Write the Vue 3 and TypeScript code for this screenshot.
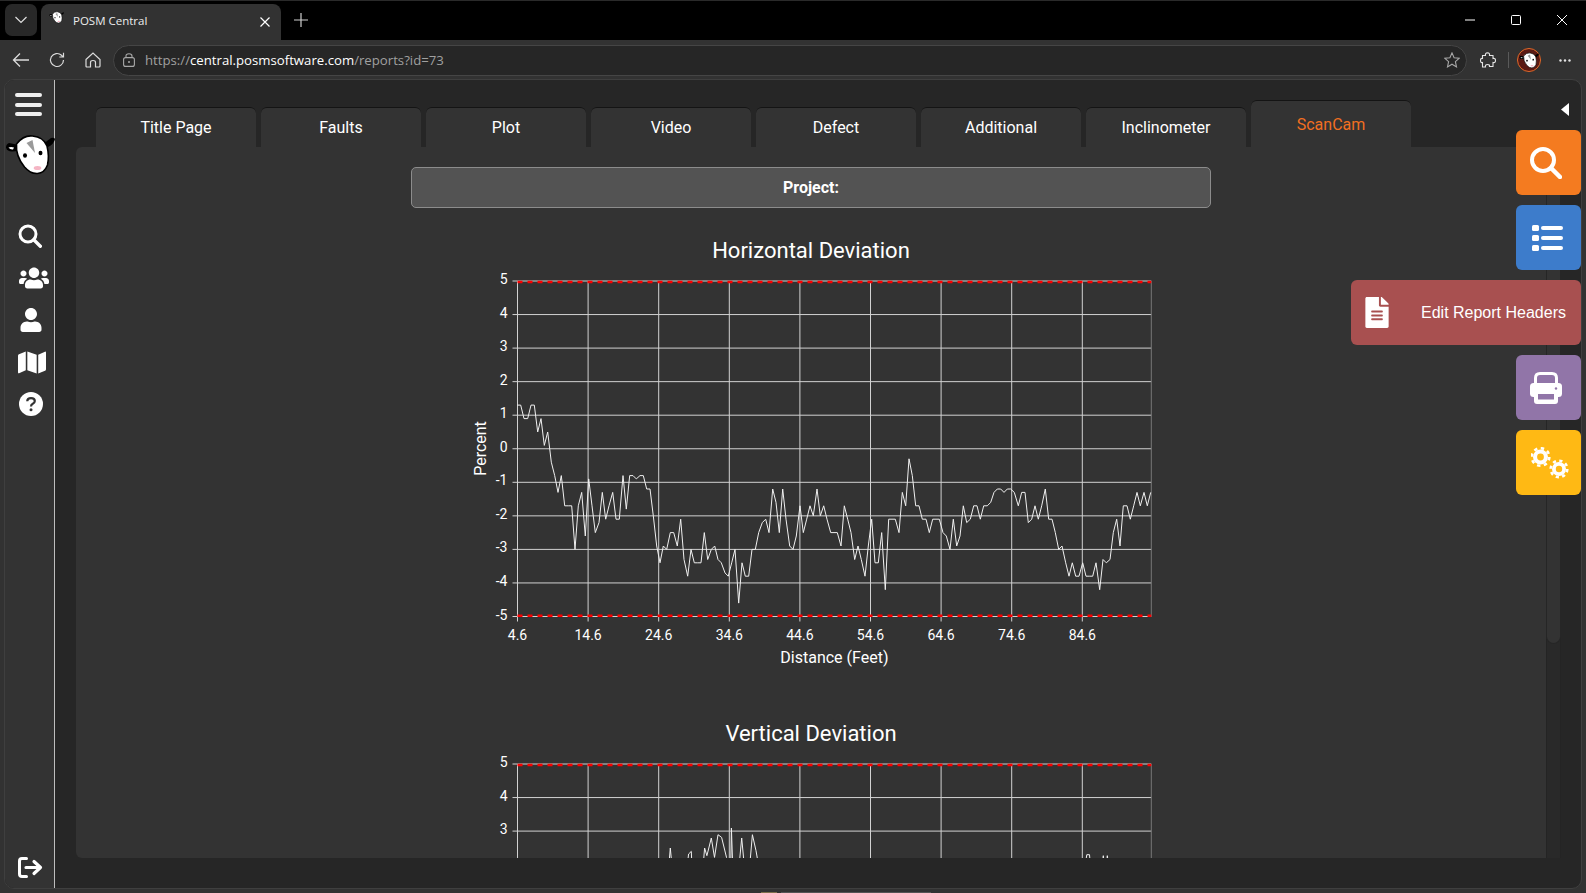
<script setup lang="ts">
const tabs: string[] = ['Title Page', 'Faults', 'Plot', 'Video', 'Defect', 'Additional', 'Inclinometer', 'ScanCam']

const originX = 461
const plotTop = 10
const unit = 33.55
const plotBottom = plotTop + unit * 10
const plotLeft = 517.5 - originX
const plotRight = 1151.3 - originX
const step = 70.6

const yOf = (v: number): number => plotTop + (5 - v) * unit

const left: number[] = [172,1.3,182,1.3,192,.9,203,.9,213,1.3,223,1.3,233,.5,243,.9,253,.1,263,.5,274,-.4,284,-.8,294,-1.3,304,-.8,314,-1.7,325,-1.7,335,-1.7,345,-3,355,-1.7,365,-1.3,376,-2.6,386,-.9,396,-1.7,406,-2.5,417,-2.2,427,-1.3,437,-2.1,447,-1.7,458,-1.3,468,-2.1,478,-2.1,489,-.8,499,-1.8,509,-.8,519,-.8,529,-.9,540,-.8,550,-.8,560,-1.2,570,-1.2,580,-2,590,-2.9,600,-3.4,610,-2.9,620,-3,631,-2.5,641,-2.5,652,-2.9,662,-2.1,672,-3.3,683,-3.8,693,-3,703,-3.4,713,-3.4,723,-3.4,733,-2.5,743,-3.3,754,-3,764,-2.9,774,-3.3,784,-3.4,795,-3.7,805,-3.8,815,-3.4,825,-3,836,-4.6,846,-3.4,856,-3.8,866,-3.8,876,-3,886,-3,896,-2.5,907,-2.2,917,-2.1,927,-2.5,938,-1.2,948,-1.6,958,-2.5,968,-1.2,978,-2.1,989,-2.9,999,-3,1009,-2.6]
const right: number[] = [0,-1.7,10,-2.5,20,-2.1,30,-1.7,40,-2,51,-1.2,61,-2,71,-1.7,81,-2.1,92,-2.5,102,-2.5,112,-2.5,123,-2.9,133,-1.7,143,-2.1,153,-2.5,164,-3.3,174,-2.9,184,-3.3,195,-3.8,205,-2.9,215,-2.1,225,-3.4,235,-3.4,245,-2.5,256,-4.2,266,-2.1,276,-2.1,286,-2.1,297,-2.5,307,-1.3,317,-1.7,327,-.3,337,-.8,347,-1.7,357,-1.7,367,-2.1,378,-2.1,388,-2.5,398,-2.1,408,-2.1,418,-2.1,429,-2.5,439,-2.6,450,-3,460,-2.1,470,-2.9,480,-2.6,490,-1.7,500,-2.2,511,-2.1,521,-1.7,531,-1.7,541,-2.1,551,-1.7,562,-1.7,572,-1.6,582,-1.3,592,-1.2,602,-1.2,612,-1.3,622,-1.2,632,-1.2,643,-1.3,655,-1.7,665,-1.3,675,-1.3,685,-2.2,695,-2.1,705,-1.7,715,-2.1,725,-1.7,736,-1.2,746,-2.1,756,-2.1,766,-2.5,776,-3,786,-2.9,797,-3.4,807,-3.8,817,-3.4,827,-3.8,837,-3.8,848,-3.4,858,-3.8,868,-3.8,878,-3.8,888,-3.4,899,-4.2,909,-3.3,919,-3.4,930,-3.3,940,-2.5,950,-2.1,960,-2.9,970,-1.7,981,-1.7,991,-2.1,1001,-1.7,1011,-1.3,1021,-1.7,1032,-1.3,1042,-1.7,1052,-1.3]

function horizontalPoints(): string {
  const out: string[] = []
  for (let i = 0; i < left.length; i += 2) out.push(`${(460 + left[i] / 3 - originX).toFixed(1)},${yOf(left[i + 1]).toFixed(1)}`)
  for (let i = 0; i < right.length; i += 2) out.push(`${(800 + right[i] / 3 - originX).toFixed(1)},${yOf(right[i + 1]).toFixed(1)}`)
  return out.join(' ')
}

const vert: number[] = [440,420,465,420,471,322,478,420,505,420,512,340,518,332,521,420,542,420,548,322,553,345,563,292,570,350,578,282,586,290,597,350,600,420,606,420,608,262,612,420,622,420,631,292,640,420,646,420,655,282,663,330,675,420,1395,420,1404,342,1410,342,1415,420,1435,420,1441,345,1445,420,1450,345,1458,420]

function verticalPoints(): string {
  const out: string[] = []
  for (let i = 0; i < vert.length; i += 2) {
    const x = 460 + vert[i] / 2.24 - originX
    const y = plotTop + (740 + vert[i + 1] / 3 - 763.3)
    out.push(`${x.toFixed(1)},${y.toFixed(1)}`)
  }
  return out.join(' ')
}

const yTicks: number[] = [5, 4, 3, 2, 1, 0, -1, -2, -3, -4, -5]
const xTicks: string[] = ['4.6', '14.6', '24.6', '34.6', '44.6', '54.6', '64.6', '74.6', '84.6']
const xOf = (i: number): number => plotLeft + i * step

const charts = [
  { title: 'Horizontal Deviation', points: horizontalPoints(), yLabels: yTicks, showAxes: true },
  { title: 'Vertical Deviation', points: verticalPoints(), yLabels: [5, 4, 3], showAxes: false },
]
</script>

<template>
  <div class="window">
    <svg class="defs" width="0" height="0">
      <defs>
        <symbol id="possum" viewBox="4 133 50 42">
          <path d="M18 144 L8 142 Q5 143 5 146.500 Q6 150.500 11 150.500 L18 150Z" fill="#000" />
          <path d="M7.500 146.500 Q10 145.500 13 146.500 L12 148.500 Q9 148.800 7.500 146.500Z" fill="#fff" />
          <path d="M42 143 L50 137 Q53 136 54 138 Q53 143 47 146Z" fill="#000" />
          <g transform="translate(-1.500 0)">
            <path d="M17 143 Q24 134 33 135 Q44 136 47.500 145 Q50 155 48 164 Q45 172 38 172.500 Q31 173 25 166 Q16 155 17 143Z" fill="#fff" stroke="#000" stroke-width="1.600" />
            <path d="M27 142 L33 139 L35.500 152Z" fill="#9a9a9a" />
            <ellipse cx="25.500" cy="154.500" rx="2" ry="2.300" fill="#000" />
            <ellipse cx="41" cy="152" rx="2" ry="2.300" fill="#000" />
            <ellipse cx="38" cy="167" rx="3.800" ry="2" fill="#f5b5c4" />
          </g>
        </symbol>
      </defs>
    </svg>

    <div class="tabstrip">
      <button class="tab-menu" type="button">
        <svg width="14" height="8" viewBox="0 0 14 8"><path d="M1.500 1 L7 6.500 L12.500 1" fill="none" stroke="#e0e0e0" stroke-width="1.200" /></svg>
      </button>
      <div class="browser-tab">
        <svg class="favicon" width="15" height="13"><use href="#possum" /></svg>
        <span class="browser-tab-title">POSM Central</span>
        <svg width="10" height="10" viewBox="0 0 10 10"><path d="M.5 .5 L9.500 9.500 M9.500 .5 L.5 9.500" stroke="#fff" stroke-width="1.200" /></svg>
      </div>
      <svg class="newtab" width="14" height="14" viewBox="0 0 14 14"><path d="M7 0 V14 M0 7 H14" stroke="#cfcfcf" stroke-width="1.200" /></svg>
      <div class="win-controls">
        <svg width="10" height="10" viewBox="0 0 10 10"><path d="M0 5 H10" stroke="#fff" stroke-width="1" /></svg>
        <svg width="10" height="10" viewBox="0 0 10 10"><rect x=".5" y=".5" width="9" height="9" rx="1" fill="none" stroke="#fff" stroke-width="1" /></svg>
        <svg width="10" height="10" viewBox="0 0 10 10"><path d="M0 0 L10 10 M10 0 L0 10" stroke="#fff" stroke-width="1" /></svg>
      </div>
    </div>

    <div class="toolbar">
      <svg class="tool tool-first" width="18" height="16" viewBox="0 0 18 16"><path d="M17 8 H1.500 M8 1.500 L1.500 8 L8 14.500" fill="none" stroke="#dcdcdc" stroke-width="1.300" /></svg>
      <svg class="tool" width="16" height="16" viewBox="0 0 16 16"><path d="M14.500 8 A6.500 6.500 0 1 1 12.500 3.300 L14 4.800 M14.500 .8 V5 H10.300" fill="none" stroke="#dcdcdc" stroke-width="1.200" /></svg>
      <svg class="tool" width="16" height="16" viewBox="0 0 16 16"><path d="M1 7.500 L8 1 L15 7.500 V14 Q15 15 14 15 H10.500 V10.500 Q10.500 8.500 8 8.500 Q5.500 8.500 5.500 10.500 V15 H2 Q1 15 1 14Z" fill="none" stroke="#dcdcdc" stroke-width="1.200" /></svg>
      <div class="address">
        <svg class="lock" width="12" height="14" viewBox="0 0 12 14"><rect x=".6" y="4.600" width="10.800" height="8.800" rx="2" fill="none" stroke="#a8a8a8" stroke-width="1.100" /><path d="M3 4.500 V3 Q3 .7 6 .7 Q9 .7 9 3 V4.500" fill="none" stroke="#a8a8a8" stroke-width="1.100" /><circle cx="6" cy="9" r="1" fill="#a8a8a8" /></svg>
        <span class="url"><span class="dim">https://</span>central.posmsoftware.com<span class="dim">/reports?id=73</span></span>
        <svg class="star" width="16" height="16" viewBox="0 0 16 16"><path d="M8 .9 L10.100 5.700 L15.300 6.200 L11.400 9.700 L12.500 14.900 L8 12.200 L3.500 14.900 L4.600 9.700 L.7 6.200 L5.900 5.700Z" fill="none" stroke="#a8a8a8" stroke-width="1.100" /></svg>
      </div>
      <svg class="puzzle" width="16" height="16" viewBox="0 0 16 16"><path d="M5.500 3.500 Q5 1 7.500 .8 Q10 1 9.500 3.500 H13 V6.500 Q15.500 6 15.500 8.500 Q15.500 11 13 10.500 V14.500 H9.500 Q10 12.500 7.500 12.500 Q5 12.500 5.500 15 H2.500 V10.500 Q.5 11 .5 8.500 Q.5 6 2.500 6.500 V3.500Z" fill="none" stroke="#e4e4e4" stroke-width="1.100" /></svg>
      <span class="tool-sep"></span>
      <span class="avatar"><svg width="20" height="17"><use href="#possum" /></svg></span>
      <svg class="more" width="12" height="3" viewBox="0 0 12 3"><circle cx="1.500" cy="1.500" r="1.200" fill="#e4e4e4" /><circle cx="6" cy="1.500" r="1.200" fill="#e4e4e4" /><circle cx="10.500" cy="1.500" r="1.200" fill="#e4e4e4" /></svg>
    </div>

    <div class="page">
      <aside class="sidebar">
        <div class="burger"><span></span><span></span><span></span></div>
        <svg class="logo" width="50" height="42"><use href="#possum" /></svg>
        <nav class="side-nav">
          <a class="side-icon">
            <svg width="24" height="24" viewBox="0 0 24 24"><circle cx="10" cy="10" r="8" fill="none" stroke="#fff" stroke-width="3" /><path d="M15.800 15.800 L22.300 22.300" stroke="#fff" stroke-width="3.400" stroke-linecap="round" /></svg>
          </a>
          <a class="side-icon shift-users">
            <svg width="30" height="24" viewBox="0 0 640 512"><path fill="#fff" d="M96 224c35.300 0 64-28.700 64-64s-28.700-64-64-64-64 28.700-64 64 28.700 64 64 64zm448 0c35.300 0 64-28.700 64-64s-28.700-64-64-64-64 28.700-64 64 28.700 64 64 64zm32 32h-64c-17.600 0-33.500 7.100-45.100 18.600 40.300 22.100 68.900 62 75.100 109.400h66c17.700 0 32-14.300 32-32v-32c0-35.300-28.700-64-64-64zm-256 0c61.900 0 112-50.100 112-112S381.900 32 320 32 208 82.100 208 144s50.100 112 112 112zm76.800 32h-8.300c-20.800 10-43.900 16-68.500 16s-47.600-6-68.500-16h-8.300C179.600 288 128 339.600 128 403.200V432c0 26.500 21.500 48 48 48h288c26.500 0 48-21.500 48-48v-28.800c0-63.600-51.600-115.200-115.200-115.200zm-223.700-13.400C161.500 263.100 145.600 256 128 256H64c-35.300 0-64 28.700-64 64v32c0 17.700 14.300 32 32 32h65.900c6.300-47.400 34.900-87.300 75.200-109.400z" /></svg>
          </a>
          <a class="side-icon shift-user">
            <svg width="22" height="24" viewBox="0 0 448 512"><path fill="#fff" d="M224 256c70.700 0 128-57.300 128-128S294.700 0 224 0 96 57.300 96 128s57.300 128 128 128zm89.600 32h-16.700c-22.200 10.200-46.900 16-72.900 16s-50.600-5.800-72.900-16h-16.700C60.200 288 0 348.200 0 422.400V464c0 26.500 21.500 48 48 48h352c26.500 0 48-21.500 48-48v-41.600c0-74.200-60.200-134.400-134.400-134.400z" /></svg>
          </a>
          <a class="side-icon shift-map">
            <svg width="28" height="25" viewBox="0 0 576 512"><path fill="#fff" d="M0 117.660v346.320c0 11.320 11.430 19.060 21.940 14.860L160 416V32L20.120 87.950A32.006 32.006 0 0 0 0 117.660zM192 416l192 64V96L192 32v384zM554.060 33.160L416 96v384l139.880-55.950A31.996 31.996 0 0 0 576 394.340V48.020c0-11.320-11.430-19.060-21.940-14.860z" /></svg>
          </a>
          <a class="side-icon shift-user">
            <svg width="24" height="24" viewBox="0 0 24 24">
              <circle cx="12" cy="12" r="12" fill="#fff" />
              <path d="M8.200 9.300 Q8.400 6.200 12 6.200 Q15.800 6.200 15.800 9 Q15.800 10.800 13.800 11.800 Q12 12.700 12 14.600" fill="none" stroke="#333" stroke-width="2.200" />
              <circle cx="12" cy="17.800" r="1.500" fill="#333" />
            </svg>
          </a>
        </nav>
        <a class="side-icon side-bottom shift-user">
          <svg width="25" height="21" viewBox="0 0 25 21"><path d="M8.500 1.500 H4 Q1.500 1.500 1.500 4 V17 Q1.500 19.500 4 19.500 H8.500" fill="none" stroke="#fff" stroke-width="3" stroke-linecap="round" /><path d="M8 10.500 H22 M16 4.500 L22.500 10.500 L16 16.500" fill="none" stroke="#fff" stroke-width="3.200" stroke-linecap="round" stroke-linejoin="round" /></svg>
        </a>
      </aside>

      <main class="main">
        <div class="tabs">
          <button v-for="(tab, i) in tabs" :key="tab" class="tab" :class="{ active: i === tabs.length - 1 }" type="button">{{ tab }}</button>
        </div>

        <div class="panel-row">
          <div class="panel">
            <div class="project-bar">Project:</div>
            <section v-for="chart in charts" :key="chart.title" class="chart">
              <h2 class="chart-title">{{ chart.title }}</h2>
              <svg class="plot" width="700" height="443" viewBox="0 0 700 443">
                <g stroke="#d2d2d2" stroke-width="1">
                  <line v-for="v in yTicks" :key="'h' + v" :x1="plotLeft - 5" :x2="plotRight" :y1="yOf(v)" :y2="yOf(v)" />
                  <line v-for="(t, i) in xTicks" :key="'v' + t" :x1="xOf(i)" :x2="xOf(i)" :y1="plotTop" :y2="plotBottom + 5" />
                  <line :x1="plotRight" :x2="plotRight" :y1="plotTop" :y2="plotBottom" stroke="#777" />
                </g>
                <line :x1="plotLeft" :x2="plotRight" :y1="plotTop + 1" :y2="plotTop + 1" class="limit" />
                <line :x1="plotLeft" :x2="plotRight" :y1="plotBottom - 0.7" :y2="plotBottom - 0.7" class="limit" />
                <polyline :points="chart.points" fill="none" stroke="#f0f0f0" stroke-width="1" />
                <text v-for="v in chart.yLabels" :key="'yl' + v" class="tick" :x="plotLeft - 10" :y="yOf(v) + 3" text-anchor="end">{{ v }}</text>
                <template v-if="chart.showAxes">
                  <text v-for="(t, i) in xTicks" :key="'xl' + t" class="tick" :x="xOf(i)" :y="plotBottom + 23.500" text-anchor="middle">{{ t }}</text>
                  <text class="axis" :x="(plotLeft + plotRight) / 2" :y="plotBottom + 46" text-anchor="middle">Distance (Feet)</text>
                  <text class="axis" transform="translate(24.500 177.500) rotate(-90)" text-anchor="middle">Percent</text>
                </template>
              </svg>
            </section>
          </div>
          <div class="track"><div class="thumb"></div></div>
        </div>

        <svg class="collapse" width="8" height="13" viewBox="0 0 8 13"><path d="M8 0 V13 L0 6.500Z" fill="#fff" /></svg>

        <div class="actions">
          <button class="action orange" type="button">
            <svg class="nudge" width="32" height="32" viewBox="0 0 32 32"><circle cx="13" cy="13" r="11" fill="none" stroke="#fff" stroke-width="4" /><path d="M21 21 L30 30" stroke="#fff" stroke-width="4.500" stroke-linecap="round" /></svg>
          </button>
          <button class="action blue" type="button">
            <svg class="nudge-small" width="32" height="26" viewBox="0 0 32 26">
              <rect x="0" y="0" width="7" height="6" rx="1.500" fill="#fff" /><rect x="0" y="10" width="7" height="6" rx="1.500" fill="#fff" /><rect x="0" y="20" width="7" height="6" rx="1.500" fill="#fff" />
              <rect x="9" y="1" width="22" height="4" rx="2" fill="#fff" /><rect x="9" y="11" width="22" height="4" rx="2" fill="#fff" /><rect x="9" y="21" width="22" height="4" rx="2" fill="#fff" />
            </svg>
          </button>
          <button class="action red wide" type="button">
            <svg width="24" height="31" viewBox="0 0 384 512"><path fill="#fff" d="M224 136V0H24C10.700 0 0 10.700 0 24v464c0 13.300 10.700 24 24 24h336c13.300 0 24-10.700 24-24V160H248c-13.200 0-24-10.800-24-24zm64 236c0 6.600-5.400 12-12 12H108c-6.600 0-12-5.400-12-12v-8c0-6.600 5.400-12 12-12h168c6.600 0 12 5.400 12 12v8zm0-64c0 6.600-5.400 12-12 12H108c-6.600 0-12-5.400-12-12v-8c0-6.600 5.400-12 12-12h168c6.600 0 12 5.400 12 12v8zm0-72v8c0 6.600-5.400 12-12 12H108c-6.600 0-12-5.400-12-12v-8c0-6.600 5.400-12 12-12h168c6.600 0 12 5.400 12 12zm96-114.100v6.100H256V0h6.100c6.400 0 12.500 2.500 17 7l97.900 98c4.500 4.500 7 10.600 7 16.900z" /></svg>
            <span>Edit Report Headers</span>
          </button>
          <button class="action purple" type="button">
            <svg class="nudge" width="32" height="32" viewBox="0 0 32 32">
              <path d="M5.500 12 V6 Q5.500 1.500 10 1.500 H22 Q26.500 1.500 26.500 6 V12" fill="none" stroke="#fff" stroke-width="3" />
              <rect x="0" y="11" width="32" height="14" rx="3.500" fill="#fff" />
              <rect x="4" y="18" width="24" height="14" rx="3" fill="#fff" />
              <rect x="8" y="22" width="16" height="5.500" fill="#9175a8" />
              <circle cx="26" cy="16.500" r="1.200" fill="#9175a8" />
            </svg>
          </button>
          <button class="action yellow" type="button">
            <svg class="gears" width="38" height="32" viewBox="0 0 38 32">
              <g transform="translate(9.500 10)"><circle r="7.500" fill="#fff" /><circle r="8.800" fill="none" stroke="#fff" stroke-width="2.600" stroke-dasharray="3.400 3.510" /><circle r="3.400" fill="#ffb914" /></g>
              <g transform="translate(28 22)"><circle r="7" fill="#fff" /><circle r="8.300" fill="none" stroke="#fff" stroke-width="2.600" stroke-dasharray="3.200 3.320" /><circle r="3.200" fill="#ffb914" /></g>
            </svg>
          </button>
        </div>
      </main>
    </div>

    <div class="under"><span class="under-mark"></span><span class="under-text"></span></div>
  </div>
</template>

<style>
html, body { margin: 0; background: #323232; }
</style>

<style scoped>
.window {
  width: 1586px;
  height: 893px;
  display: flex;
  flex-direction: column;
  background: #323232;
  overflow: hidden;
  font-family: Roboto, "Liberation Sans", sans-serif;
  color: #fff;
}
.defs { position: absolute; }

.tabstrip {
  height: 40px;
  flex: none;
  background: #000;
  display: flex;
  align-items: flex-start;
  box-sizing: border-box;
  padding: 4px 0 0 5px;
  border-top: 1px solid #2a2a2a;
}
.tab-menu {
  width: 32px;
  height: 32px;
  margin-top: -1px;
  border: 0;
  border-radius: 7px;
  background: #282828;
  padding: 0;
  display: flex;
  align-items: center;
  justify-content: center;
}
.browser-tab {
  width: 240px;
  height: 36px;
  margin: -1px 0 0 4px;
  border-radius: 8px 8px 0 0;
  background: #323232;
  display: flex;
  align-items: center;
  box-sizing: border-box;
  padding: 0 11px 0 8px;
}
.favicon { margin-top: -10px; flex: none; }
.browser-tab-title {
  flex: 1;
  margin-left: 9px;
  margin-top: -4px;
  font: 11.500px "Open Sans", "Noto Sans", sans-serif;
  color: #ececec;
}
.newtab { margin: 8px 0 0 13px; }
.win-controls {
  margin-left: auto;
  margin-top: 10px;
  padding-right: 19px;
  display: flex;
  gap: 36px;
}

.toolbar {
  height: 39px;
  flex: none;
  background: #323232;
  display: flex;
  align-items: center;
  box-sizing: border-box;
  padding: 1px 15px 0 12px;
}
.tool { margin-left: 20px; flex: none; }
.tool:nth-child(2) { margin-left: 19px; }
.tool-first { margin-left: 0; }
.address {
  width: 1354px;
  height: 31px;
  margin-left: 12px;
  box-sizing: border-box;
  border: 1px solid #454545;
  border-radius: 16px;
  background: #262626;
  display: flex;
  align-items: center;
  padding: 0 6px 0 9px;
  flex: none;
}
.lock { flex: none; }
.url {
  margin-left: 10px;
  font: 13.200px "Open Sans", "Noto Sans", sans-serif;
  color: #fff;
  flex: 1;
}
.dim { color: #a0a0a0; }
.puzzle { margin-left: 13px; flex: none; }
.tool-sep { width: 1px; height: 16px; background: #5a5a5a; margin-left: 12px; flex: none; }
.avatar {
  width: 24px;
  height: 24px;
  margin-left: 8px;
  flex: none;
  box-sizing: border-box;
  border-radius: 50%;
  border: 1px solid #e06a2a;
  background: #5a1a14;
  display: flex;
  align-items: center;
  justify-content: center;
}
.more { margin-left: 18px; flex: none; }

.page {
  flex: 1;
  min-height: 0;
  margin: 0 4px;
  box-sizing: border-box;
  border: 1px solid #3f3f3f;
  border-radius: 10px;
  background: #262626;
  display: flex;
  overflow: hidden;
  position: relative;
}
.under {
  height: 4px;
  flex: none;
  display: flex;
  align-items: flex-end;
  padding-left: 761px;
  gap: 4px;
}
.under-mark { width: 16px; height: 1.500px; background: #7d6f4c; }
.under-text { width: 150px; height: 1px; background: #555; }

.sidebar {
  width: 50px;
  flex: none;
  box-sizing: border-box;
  background: #333;
  border-right: 1px solid #bdbdbd;
  display: flex;
  flex-direction: column;
  align-items: center;
}
.burger {
  width: 27px;
  margin: 13px 0 0 -3px;
  display: flex;
  flex-direction: column;
  gap: 5.500px;
}
.burger span { height: 4px; border-radius: 2px; background: #efefef; }
.logo { margin-top: 17.500px; flex: none; }
.side-nav { margin-top: 39.500px; display: flex; flex-direction: column; }
.side-icon {
  width: 49px;
  height: 42px;
  display: flex;
  align-items: center;
  justify-content: center;
  box-sizing: border-box;
}
.shift-users { padding-left: 8px; }
.shift-user { padding-left: 2px; }
.shift-map { padding-left: 5px; }
.side-bottom { margin-top: auto; }

.main {
  flex: 1;
  min-width: 0;
  display: flex;
  flex-direction: column;
  padding-top: 20px;
  box-sizing: border-box;
}
.tabs {
  height: 47px;
  flex: none;
  display: flex;
  align-items: flex-end;
  gap: 5px;
  padding-left: 41px;
}
.tab {
  width: 160px;
  height: 40px;
  box-sizing: border-box;
  border: 0;
  border-top: 1px solid #141414;
  border-radius: 6px 6px 0 0;
  background: #333;
  color: #fff;
  font: 16px Roboto, sans-serif;
  padding: 0;
}
.tab.active { height: 47px; color: #f26f21; }

.panel-row {
  flex: 1;
  min-height: 0;
  margin: 0 20px 30px 21px;
  display: flex;
}
.panel {
  flex: 1;
  min-width: 0;
  overflow: hidden;
  background: #333;
  border-radius: 6px 0 0 6px;
}
.project-bar {
  width: 800px;
  height: 41px;
  margin: 20px auto 22.500px;
  box-sizing: border-box;
  border: 1px solid #8c8c8c;
  border-radius: 5px;
  background: #535353;
  display: flex;
  align-items: center;
  justify-content: center;
  font: 700 16px Roboto, sans-serif;
}
.chart { height: 483px; }
.chart-title {
  margin: 0;
  height: 40px;
  text-align: center;
  font: 400 22px/40px Roboto, sans-serif;
  color: #fff;
}
.plot { display: block; margin: 0 auto; overflow: visible; }
.limit { stroke: #f00; stroke-width: 2.500; stroke-dasharray: 5 5; }
.tick { font: 14px Roboto, sans-serif; fill: #fff; }
.axis { font: 16px Roboto, sans-serif; fill: #fff; }

.track {
  width: 15px;
  flex: none;
  background: #292929;
  box-sizing: border-box;
  border-left: 1px solid #242424;
  border-right: 1px solid #242424;
}
.thumb {
  height: 497px;
  box-sizing: border-box;
  margin: 0 -1px;
  background: #333;
  border: 1px solid #262626;
  border-top: 0;
  border-radius: 0 0 8px 8px;
}

.collapse { position: absolute; top: 23px; right: 12px; }
.actions {
  position: absolute;
  top: 50px;
  right: 0;
  display: flex;
  flex-direction: column;
  align-items: flex-end;
  gap: 10px;
}
.action {
  width: 65px;
  height: 65px;
  border: 0;
  border-radius: 6px;
  padding: 0;
  display: flex;
  align-items: center;
  justify-content: center;
  color: #fff;
}
.orange { background: #f47b20; }
.blue { background: #3d7ccb; }
.red { background: #a85050; }
.purple { background: #9175a8; }
.yellow { background: #ffb914; }
.wide {
  width: 230px;
  justify-content: flex-start;
  padding-left: 14px;
  font: 16px "Liberation Sans", Arial, sans-serif;
}
.wide span { margin-left: 32px; }
.nudge { margin-right: 5px; }
.nudge-small { margin-right: 1px; }
.gears { margin-left: 2px; }
</style>
